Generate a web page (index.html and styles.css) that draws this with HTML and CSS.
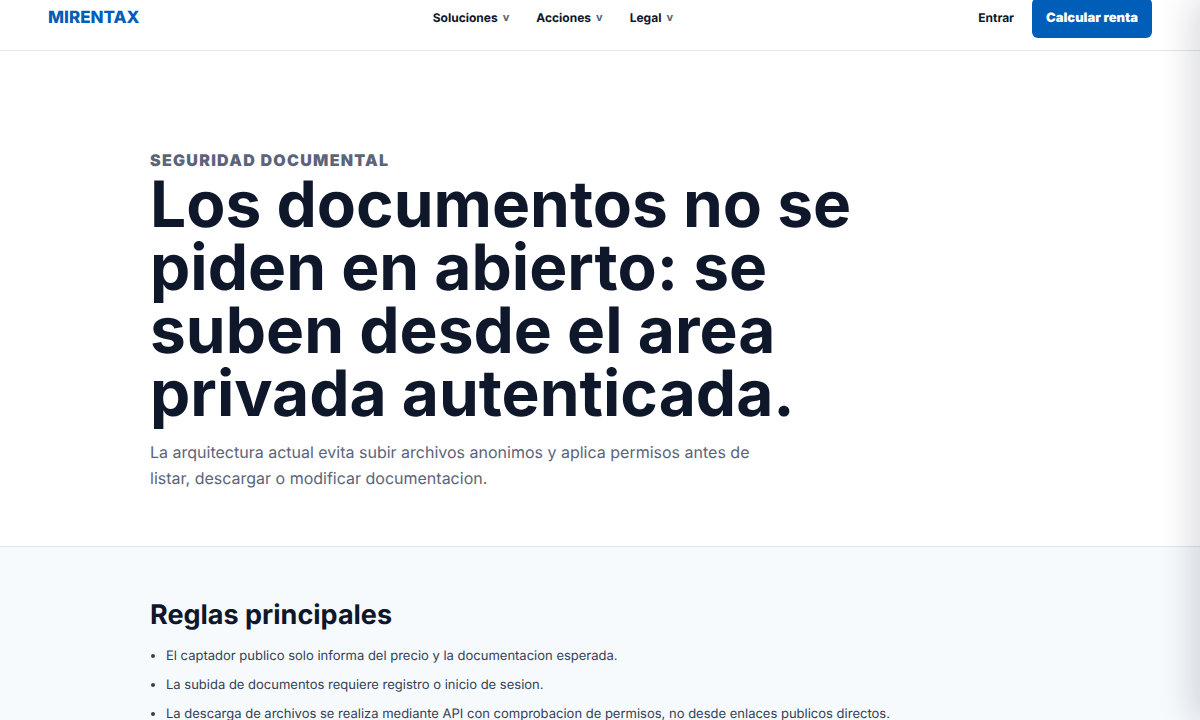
FILE: index.html
```
<!DOCTYPE html>
<html lang="es">
<head>
    <meta charset="UTF-8">
    <meta name="viewport" content="width=device-width, initial-scale=1.0">
    <title>Seguridad documental | MIRENTAX</title>
    <link rel="stylesheet" href="styles.css">
</head>
<body>
    <header class="site-header">
        <a class="brand" href="#">MIRENTAX</a>
        <nav class="main-nav">
            <button class="nav-item" type="button">Soluciones <span class="caret">v</span></button>
            <button class="nav-item" type="button">Acciones <span class="caret">v</span></button>
            <button class="nav-item" type="button">Legal <span class="caret">v</span></button>
        </nav>
        <div class="header-actions">
            <a class="login" href="#">Entrar</a>
            <a class="btn-primary" href="#">Calcular renta</a>
        </div>
    </header>

    <main>
        <section class="hero">
            <div class="container">
                <p class="eyebrow">Seguridad documental</p>
                <h1>Los documentos no se piden en abierto: se suben desde el area privada autenticada.</h1>
                <p class="lead">La arquitectura actual evita subir archivos anonimos y aplica permisos antes de listar, descargar o modificar documentacion.</p>
            </div>
        </section>

        <section class="rules">
            <div class="container">
                <h2>Reglas principales</h2>
                <ul>
                    <li>El captador publico solo informa del precio y la documentacion esperada.</li>
                    <li>La subida de documentos requiere registro o inicio de sesion.</li>
                    <li>La descarga de archivos se realiza mediante API con comprobacion de permisos, no desde enlaces publicos directos.</li>
                </ul>
            </div>
        </section>
    </main>

    <!-- Closed side panel, only its shadow reaches the page -->
    <aside class="drawer" aria-hidden="true"></aside>
</body>
</html>
```
FILE: styles.css
```
* {
    box-sizing: border-box;
}
body {
    margin: 0;
    font-family: Inter, "Liberation Sans", sans-serif;
    text-rendering: geometricPrecision;
    background: #fff;
    color: #0f172a;
    overflow-x: hidden;
}
.site-header {
    display: flex;
    justify-content: space-between;
    align-items: center;
    height: 51px;
    padding: 0 48px 14px;
    border-bottom: 1px solid #dbe7f1;
}
.brand {
    color: #005eb8;
    font-size: 17px;
    font-weight: 800;
    line-height: 22px;
    text-decoration: none;
}
.main-nav {
    display: flex;
    gap: 27px;
    margin-right: 12px;
}
.nav-item {
    display: flex;
    align-items: flex-start;
    gap: 5px;
    padding: 0;
    border: 0;
    background: none;
    color: #0f172a;
    font-family: inherit;
    font-size: 12px;
    font-weight: 700;
    line-height: 16px;
    text-rendering: inherit;
    cursor: pointer;
}
.caret {
    color: #5b6478;
    font-size: 11px;
    line-height: 14px;
}
.header-actions {
    display: flex;
    align-items: center;
    gap: 18px;
}
.login {
    color: #0f172a;
    font-size: 12px;
    font-weight: 700;
    line-height: 16px;
    text-decoration: none;
}
.btn-primary {
    padding: 12px 14px;
    border-radius: 6px;
    background: #005eb8;
    color: #fff;
    font-size: 13px;
    font-weight: 900;
    line-height: 16px;
    text-decoration: none;
}
.container {
    max-width: 948px;
    margin: 0 auto;
    padding: 0 24px;
}
.hero {
    padding: 96px 0 55px;
    border-bottom: 1px solid #dbe7f1;
}
.eyebrow {
    margin: 0;
    color: #5b6478;
    font-size: 16px;
    font-weight: 900;
    letter-spacing: 0.08em;
    line-height: 26px;
    text-transform: uppercase;
}
h1 {
    max-width: 760px;
    margin: 0;
    font-size: 64px;
    font-weight: 700;
    line-height: 63px;
}
.lead {
    max-width: 640px;
    margin: 14px 0 0;
    color: #5b6478;
    font-size: 16px;
    line-height: 26px;
}
.rules {
    padding: 50px 0;
    background: #f6fafd;
}
h2 {
    margin: 0 0 13px;
    font-size: 27px;
    font-weight: 700;
    line-height: 36px;
}
.rules ul {
    display: grid;
    gap: 8px;
    margin: 0;
    padding-left: 16px;
    color: #334155;
    font-size: 13px;
    line-height: 21px;
}
.drawer {
    position: fixed;
    top: 0;
    bottom: 0;
    left: 100%;
    width: 360px;
    background: #fff;
    box-shadow: -10px 0 30px rgba(15, 23, 42, 0.14);
}
```
